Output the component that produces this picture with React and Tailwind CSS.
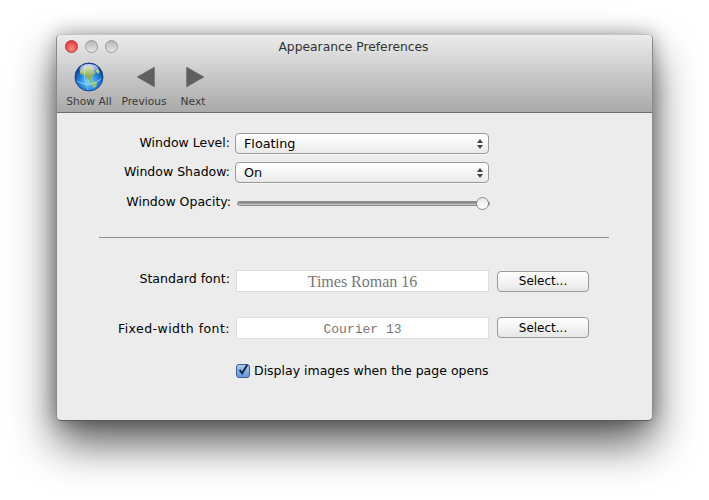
import React from 'react'

function Light({ className }) {
  return <div className={`w-[13px] h-[13px] rounded-full border ${className}`} />
}

function Globe() {
  return (
    <svg width="30" height="30" viewBox="0 0 30 30">
      <defs>
        <radialGradient id="sea" cx="50%" cy="65%" r="60%">
          <stop offset="0%" stopColor="#7fd8fa" />
          <stop offset="55%" stopColor="#2585e0" />
          <stop offset="100%" stopColor="#0c3a98" />
        </radialGradient>
        <linearGradient id="shine" x1="0" y1="0" x2="0" y2="1">
          <stop offset="0%" stopColor="#fff" stopOpacity="0.85" />
          <stop offset="100%" stopColor="#fff" stopOpacity="0.05" />
        </linearGradient>
      </defs>
      <circle cx="15" cy="15" r="14" fill="url(#sea)" stroke="#0d3a7c" strokeWidth="0.8" />
      <path d="M6 9 L10 5 L17 4 L21 7 L19 9 L21 11 L19 14 L17 17 L18 21 L16 20 L13 15 L9 13 L6 12 Z" fill="#8fb356" />
      <path d="M19 19 L23 20 L22 25 L19 26 L18 22 Z" fill="#9abf60" />
      <path d="M24 7 L26 10 L24 12 L22 9 Z" fill="#a8c86c" />
      <path d="M3 19 Q15 27 27 17" fill="none" stroke="#d6f0ff" strokeWidth="0.7" opacity="0.8" />
      <path d="M12 2 Q8 15 14 28" fill="none" stroke="#d6f0ff" strokeWidth="0.7" opacity="0.6" />
      <ellipse cx="15" cy="7.5" rx="9.5" ry="5.5" fill="url(#shine)" />
    </svg>
  )
}

function Tool({ icon, label, className }) {
  return (
    <div className={`flex flex-col items-center ${className}`}>
      <div className="h-[32px] flex items-center justify-center">{icon}</div>
      <span className="text-[10.7px] leading-[13px] mt-[2px] text-[#3a3a3a] whitespace-nowrap">{label}</span>
    </div>
  )
}

function Arrow({ left }) {
  return (
    <svg width="20" height="22" viewBox="0 0 20 22" className="ml-[3px]">
      <path d={left ? 'M18.5 1 L18.5 21 L1 11 Z' : 'M1.5 1 L1.5 21 L19 11 Z'} fill="#5f5f5f" stroke="#6a6a6a" strokeWidth="0.5" />
    </svg>
  )
}

function Select({ value }) {
  return (
    <div className="w-[254px] h-[21px] rounded-[4px] border border-[#9a9a9a] bg-gradient-to-b from-white via-[#f6f6f6] to-[#e9e9e9] flex items-center justify-between pl-[8px] pr-[5px] shadow-[0_1px_0_rgba(255,255,255,0.6)]">
      <span className="text-[12.8px] text-black">{value}</span>
      <span className="flex flex-col gap-[2px]">
        <span className="w-0 h-0 border-x-[3px] border-x-transparent border-b-[4px] border-b-[#444]" />
        <span className="w-0 h-0 border-x-[3px] border-x-transparent border-t-[4px] border-t-[#444]" />
      </span>
    </div>
  )
}

function FontField({ className, children }) {
  return (
    <div className={`w-[253px] h-[22px] bg-white border border-[#dcdcdc] flex items-center justify-center text-[#777] ${className}`}>
      {children}
    </div>
  )
}

function SelectButton() {
  return (
    <div className="w-[92px] h-[21px] rounded-[4px] border border-[#9a9a9a] bg-gradient-to-b from-white via-[#f4f4f4] to-[#e6e6e6] flex items-center justify-center text-[12px] text-black">
      Select...
    </div>
  )
}

export default function App() {
  return (
    <div className="w-[709px] h-[500px] bg-white overflow-hidden pl-[56px] pt-[34px] font-['DejaVu_Sans',sans-serif]">
      <div className="w-[597px] h-[387px] rounded-[5px] border border-[#8a8a8a] border-t-[#c4c4c4] border-b-[#5a5a5a] bg-[#ececec] shadow-[0_22px_44px_rgba(0,0,0,0.65),0_0_18px_rgba(0,0,0,0.3)] flex flex-col">
        <div className="h-[78px] shrink-0 rounded-t-[4px] bg-gradient-to-b from-[#ececec] to-[#a9a9a9] border-b border-[#6e6e6e] flex flex-col">
          <div className="relative h-[22px] flex items-center pl-[8px] gap-[7px]">
            <Light className="bg-[radial-gradient(circle_at_50%_70%,#ff8a80,#e0262a)] border-[#a83a3a]" />
            <Light className="bg-gradient-to-b from-[#b5b5b5] to-[#e8e8e8] border-[#9a9a9a]" />
            <Light className="bg-gradient-to-b from-[#b5b5b5] to-[#e8e8e8] border-[#9a9a9a]" />
            <div className="absolute left-0 right-[2px] top-[5px] text-center text-[12.3px] leading-[15px] text-[#333]">Appearance Preferences</div>
          </div>
          <div className="flex items-start pl-[9px] pt-[4px]">
            <Tool icon={<Globe />} label="Show All" className="w-[46px]" />
            <Tool icon={<Arrow left />} label="Previous" className="w-[48px] ml-[8px]" />
            <Tool icon={<Arrow />} label="Next" className="w-[30px] ml-[10px]" />
          </div>
        </div>

        <div className="flex flex-col pt-[20px]">
          <div className="flex items-center h-[21px]">
            <div className="w-[173px] text-right text-[12.5px] text-black">Window Level:</div>
            <div className="ml-[5px]"><Select value="Floating" /></div>
          </div>
          <div className="flex items-center h-[21px] mt-[8px]">
            <div className="w-[173px] text-right text-[12.5px] text-black">Window Shadow:</div>
            <div className="ml-[5px]"><Select value="On" /></div>
          </div>
          <div className="flex items-center h-[14px] mt-[13px]">
            <div className="w-[174px] text-right text-[12.5px] text-black whitespace-nowrap -mt-[2px]">Window Opacity:</div>
            <div className="relative ml-[6px] w-[253px] h-[5px] rounded-full border border-[#8c8c8c] bg-gradient-to-b from-[#777] to-[#cfcfcf]">
              <div className="absolute right-0 top-[-5px] w-[13px] h-[13px] rounded-full border border-[#8c8c8c] bg-gradient-to-b from-[#e8e8e8] to-white" />
            </div>
          </div>

          <div className="h-px bg-[#8f8f8f] ml-[42px] w-[510px] mt-[27px]" />

          <div className="flex items-center h-[22px] mt-[32px]">
            <div className="w-[173px] text-right text-[12.6px] text-black -mt-[4px]">Standard font:</div>
            <div className="ml-[6px]"><FontField className="font-['Liberation_Serif',serif] text-[16px] pt-[1px]">Times Roman 16</FontField></div>
            <div className="ml-[8px]"><SelectButton /></div>
          </div>
          <div className="flex items-center h-[22px] mt-[25px]">
            <div className="w-[173px] text-right text-[12.5px] tracking-[0.45px] text-black mt-[3px]">Fixed-width font:</div>
            <div className="ml-[6px]"><FontField className="font-['Liberation_Mono',monospace] text-[13px] pt-[3px]">Courier 13</FontField></div>
            <div className="ml-[8px] -mt-[1px]"><SelectButton /></div>
          </div>
          <div className="flex items-center mt-[23px] ml-[179px]">
            <div className="w-[14px] h-[14px] rounded-[3px] border border-[#3f5f95] bg-gradient-to-b from-[#a9c9ee] to-[#5e98de] flex items-center justify-center">
              <svg width="14" height="15" viewBox="0 0 14 15" className="-mt-[3px]">
                <path d="M3 8 L6 12 L12 2" fill="none" stroke="#12233f" strokeWidth="2.2" />
              </svg>
            </div>
            <span className="ml-[4px] text-[12.5px] text-black whitespace-nowrap">Display images when the page opens</span>
          </div>
        </div>
      </div>
    </div>
  )
}
